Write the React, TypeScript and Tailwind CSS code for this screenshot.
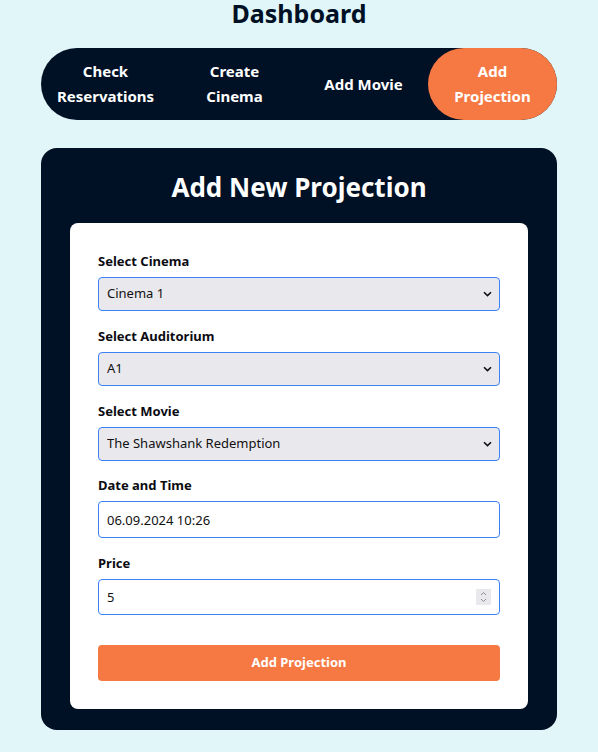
import React from "react";

const font = { fontFamily: '"Noto Sans", "Open Sans", sans-serif' };

function Chevron() {
  return (
    <svg className="pointer-events-none absolute right-[8px] top-1/2 -translate-y-1/2" width="9" height="6" viewBox="0 0 9 6">
      <path d="M1 1.2 L4.5 4.6 L8 1.2" fill="none" stroke="#111" strokeWidth="1.6" />
    </svg>
  );
}

function SelectField({ label, value }: { label: string; value: string }) {
  return (
    <div>
      <label className="block text-[13px] font-bold leading-[20px] text-[#0b0b12] mb-[6px]">{label}</label>
      <div className="relative">
        <select
          className="block w-full h-[34px] appearance-none rounded-[4px] border border-[#3b82f6] bg-[#e9e8ed] pl-[8px] pr-[28px] text-[13px] text-[#111] outline-none"
          style={font}
          defaultValue={value}
        >
          <option value={value}>{value}</option>
        </select>
        <Chevron />
      </div>
    </div>
  );
}

export default function App() {
  return (
    <div className="min-h-[752px] w-full bg-[#e0f6f9]" style={font}>
      <h1 className="text-center text-[25px] font-bold leading-[26px] text-[#001025]">Dashboard</h1>
      <div className="px-[41px]">
        <nav className="mt-[22px] grid h-[72px] grid-cols-4 rounded-full bg-[#001025] text-[15px] font-bold leading-[25px] text-white">
          <div className="flex items-center justify-center text-center">Check<br />Reservations</div>
          <div className="flex items-center justify-center text-center">Create<br />Cinema</div>
          <div className="flex items-center justify-center text-center">Add Movie</div>
          <div className="flex items-center justify-center rounded-full bg-[#f67943] text-center">Add<br />Projection</div>
        </nav>
        <div className="mt-[28px] rounded-[16px] bg-[#001025] px-[29px] pb-[21px] pt-[22px]">
          <h2 className="text-center text-[26px] font-bold leading-[34px] text-white">Add New Projection</h2>
          <div className="mt-[19px] rounded-[8px] bg-white px-[28px] pb-[28px] pt-[28px]">
            <div className="flex flex-col gap-[15px]">
              <SelectField label="Select Cinema" value="Cinema 1" />
              <SelectField label="Select Auditorium" value="A1" />
              <SelectField label="Select Movie" value="The Shawshank Redemption" />
              <div className="-mt-[1px]">
                <label className="block text-[13px] font-bold leading-[20px] text-[#0b0b12] mb-[6px]">Date and Time</label>
                <input
                  type="text"
                  readOnly
                  value="06.09.2024 10:26"
                  className="block w-full h-[37px] rounded-[4px] border border-[#3b82f6] bg-white px-[8px] text-[13px] text-[#111] outline-none"
                  style={font}
                />
              </div>
              <div>
                <label className="block text-[13px] font-bold leading-[20px] text-[#0b0b12] mb-[6px]">Price</label>
                <div className="relative">
                  <input
                    type="text"
                    readOnly
                    value="5"
                    className="block w-full h-[36px] rounded-[4px] border border-[#3b82f6] bg-white px-[8px] text-[13px] text-[#111] outline-none"
                    style={font}
                  />
                  <div className="pointer-events-none absolute right-[9px] top-1/2 flex h-[16px] w-[15px] -translate-y-1/2 items-center justify-center bg-[#e9e9ed]">
                    <svg width="7" height="12" viewBox="0 0 7 12">
                      <path d="M1 4 L3.5 1.5 L6 4 M1 8 L3.5 10.5 L6 8" fill="none" stroke="#8a8a90" strokeWidth="1" />
                    </svg>
                  </div>
                </div>
              </div>
            </div>
            <button className="mt-[30px] block h-[36px] w-full rounded-[4px] bg-[#f67943] text-[13px] font-bold text-white" style={font}>
              Add Projection
            </button>
          </div>
        </div>
      </div>
    </div>
  );
}
